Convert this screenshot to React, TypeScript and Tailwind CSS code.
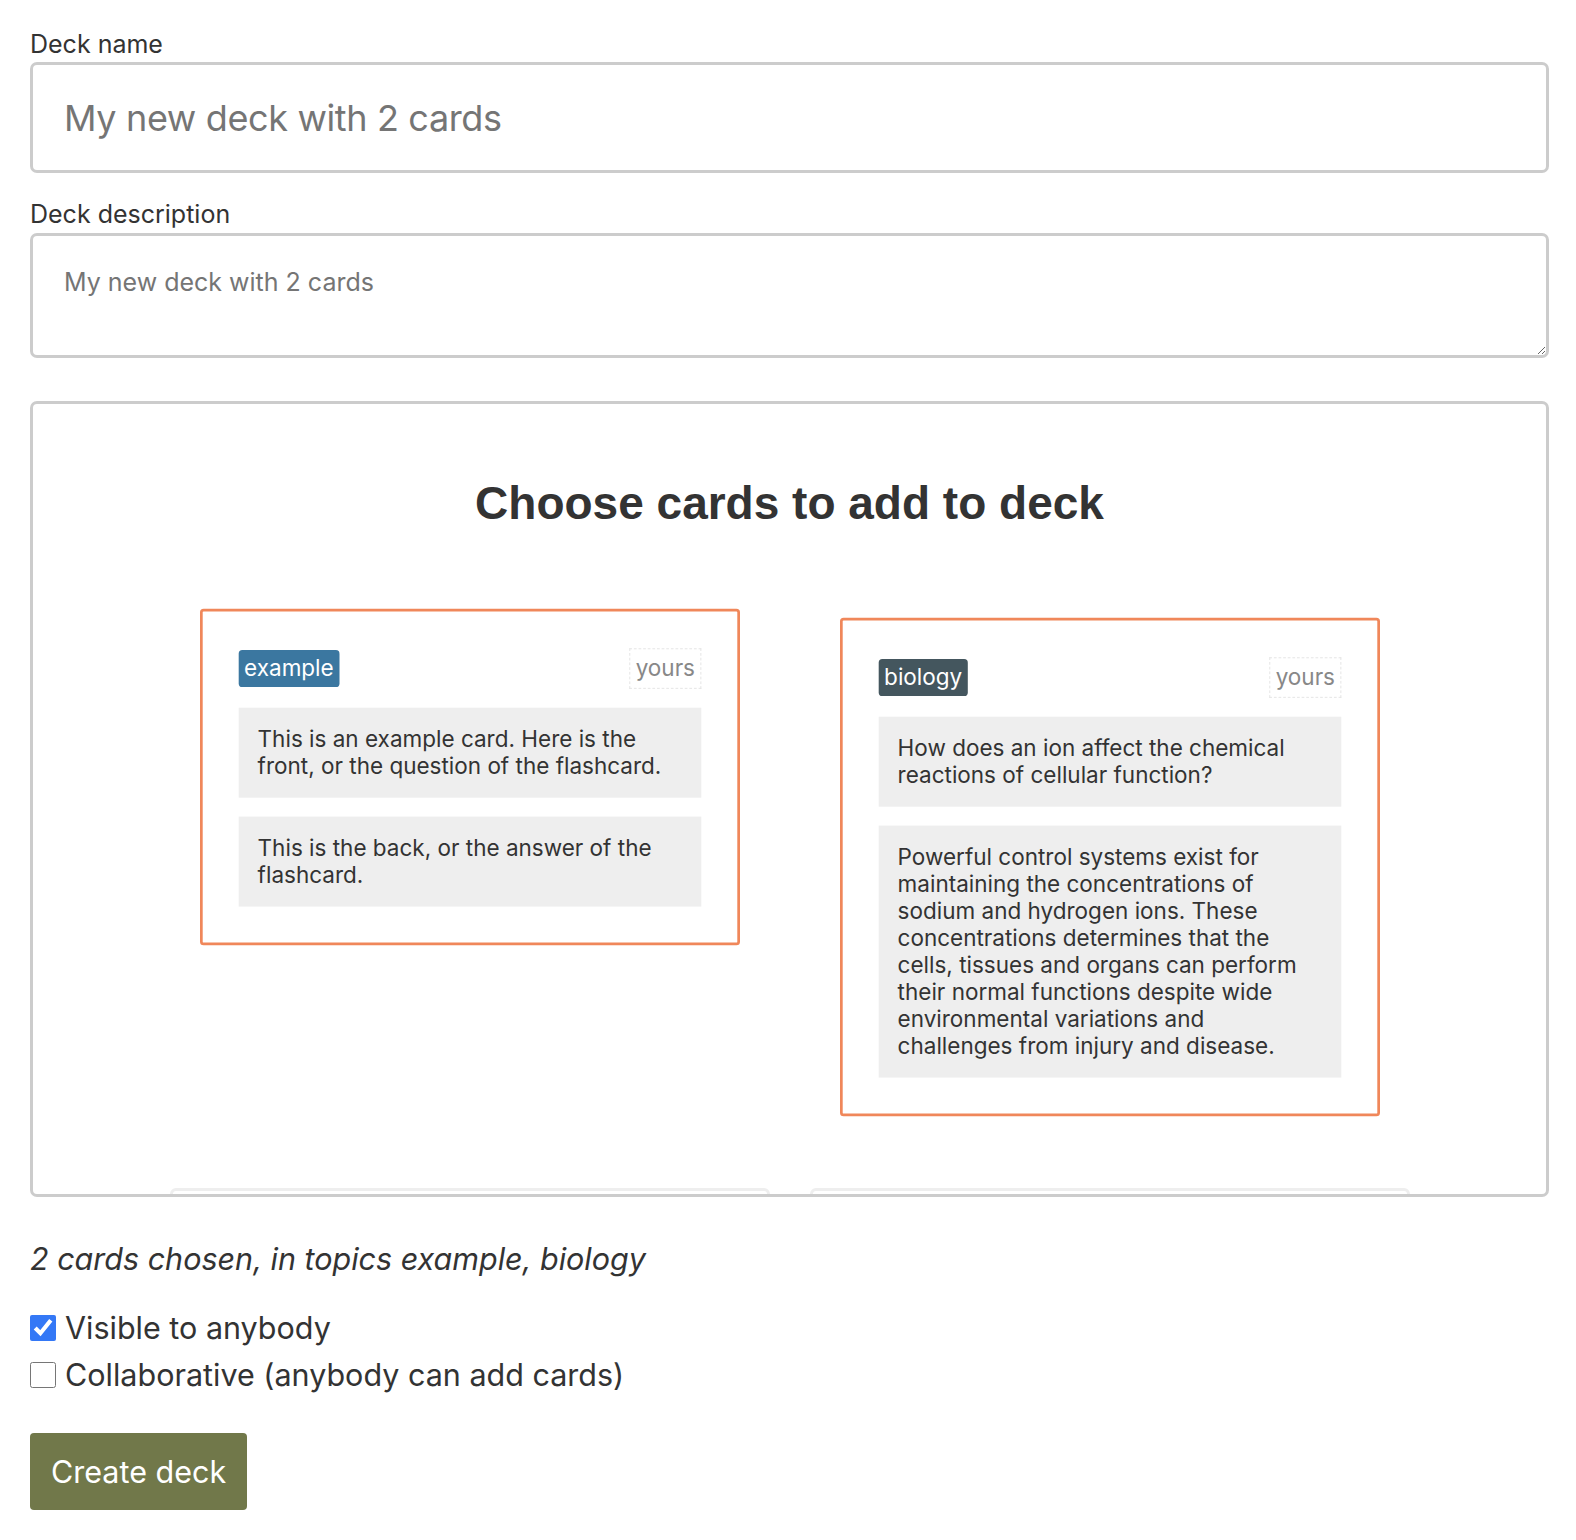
import React, { useState } from "react";

interface Card {
  topic: string;
  topicClass: string;
  front: string;
  back: string;
}

const chosenCards: Card[] = [
  {
    topic: "example",
    topicClass: "bg-[#3b77a0]",
    front: "This is an example card. Here is the front, or the question of the flashcard.",
    back: "This is the back, or the answer of the flashcard.",
  },
  {
    topic: "biology",
    topicClass: "bg-[#44565e]",
    front: "How does an ion affect the chemical reactions of cellular function?",
    back: "Powerful control systems exist for maintaining the concentrations of sodium and hydrogen ions. These concentrations determines that the cells, tissues and organs can perform their normal functions despite wide environmental variations and challenges from injury and disease.",
  },
];

const FlashCard: React.FC<{ card: Card }> = ({ card }) => {
  // chosen cards shrink a little and get the orange outline
  return (
    <div className="scale-90 border-[3px] border-[#f0875a] rounded-[4px] bg-white px-[40px] pt-[41px] pb-[40px] flex flex-col gap-[21px]">
      <div className="flex items-center justify-between">
        <span className={`${card.topicClass} text-white text-[25px] leading-[41px] px-[6px] rounded-[4px]`}>
          {card.topic}
        </span>
        <span className="border-[1.5px] border-dashed border-[#e2e2e2] text-[#888] text-[25px] leading-[43px] px-[6px]">
          yours
        </span>
      </div>
      <div className="bg-[#eeeeee] px-[21px] py-[20px] text-[25px] leading-[30px] text-[#333]">
        {card.front}
      </div>
      <div className="bg-[#eeeeee] px-[21px] py-[20px] text-[25px] leading-[30px] text-[#333]">
        {card.back}
      </div>
    </div>
  );
};

// cards further down the list, scrolled out of view
const HiddenCard = () => (
  <div className="h-[300px] border-[3px] border-[#eeeeee] rounded-[6px] bg-white" />
);

export default function App() {
  const [visible, setVisible] = useState(true);
  const [collab, setCollab] = useState(false);

  return (
    <div className="min-h-screen bg-white pl-[30px] pr-[27px] pt-[27px] pb-[30px] text-[#333] font-['Inter',sans-serif]">
      <label className="block text-[25px] leading-[34px]">Deck name</label>
      <input
        className="mt-[1px] block w-full h-[111px] border-[3px] border-[#cccccc] rounded-[7px] px-[31px] text-[36px] tracking-[-0.01em] text-[#333] placeholder:text-[#757575] outline-none"
        placeholder="My new deck with 2 cards"
      />

      <label className="block mt-[24px] text-[25px] leading-[34px]">Deck description</label>
      <textarea
        className="mt-[2px] block w-full h-[125px] border-[3px] border-[#cccccc] rounded-[7px] px-[31px] pt-[28px] text-[25px] leading-[36px] text-[#333] placeholder:text-[#757575] outline-none"
        placeholder="My new deck with 2 cards"
      />

      <div className="mt-[43px] h-[796px] overflow-hidden border-[3px] border-[#cccccc] rounded-[7px]">
        <h2 className="pt-[70px] text-center text-[46px] leading-[58px] font-bold font-['Liberation_Sans',sans-serif] text-[#333]">
          Choose cards to add to deck
        </h2>
        <div className="mt-[58px] grid grid-cols-[600px_600px] justify-center gap-x-[40px] gap-y-[44px] items-start">
          {chosenCards.map((c, i) => (
            <FlashCard key={i} card={c} />
          ))}
          <HiddenCard />
          <HiddenCard />
        </div>
      </div>

      <p className="mt-[42px] text-[30.5px] leading-[40px] italic">
        2 cards chosen, in topics example, biology
      </p>

      <div className="mt-[25px] flex flex-col">
        <label className="flex items-center gap-[9px] text-[30.5px] leading-[47px]">
          <input
            type="checkbox"
            checked={visible}
            onChange={() => setVisible(!visible)}
            className="w-[26px] h-[26px] m-0 accent-[#3478f6]"
          />
          Visible to anybody
        </label>
        <label className="flex items-center gap-[9px] text-[30.5px] leading-[47px]">
          <input
            type="checkbox"
            checked={collab}
            onChange={() => setCollab(!collab)}
            className="w-[26px] h-[26px] m-0 accent-[#3478f6]"
          />
          Collaborative (anybody can add cards)
        </label>
      </div>

      <button className="mt-[35px] block h-[77px] px-[21px] bg-[#71784a] text-white text-[30.5px] rounded-[4px]">
        Create deck
      </button>
    </div>
  );
}
